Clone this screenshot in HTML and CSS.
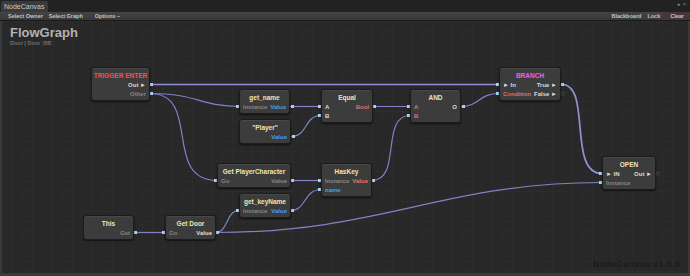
FILE: index.html
```html
<!DOCTYPE html>
<html lang="en">
<head>
    <title>NodeCanvas</title>
    <link rel="stylesheet" href="styles.css">
</head>
<body>
    <div class="window">
        <div class="tabbar">
            <div class="tab">NodeCanvas</div>
            <div class="win-icons"><span>&#9679;</span><span>&#215;</span></div>
        </div>
        <div class="toolbar">
            <span class="tool">Select Owner</span>
            <span class="tool">Select Graph</span>
            <span class="tool options">Options &#8211;</span>
            <span class="spacer"></span>
            <span class="tool">Blackboard</span>
            <span class="tool">Lock</span>
            <span class="tool clear">Clear</span>
        </div>
        <div class="canvas">
            <h1 class="graph-title">FlowGraph</h1>
            <div class="graph-sub">Door | Door_BB</div>

            <!-- wires -->
            <svg class="wires" width="686" height="253" viewBox="0 0 686 253">
                <g fill="none" stroke="#8380c6" stroke-width="1.2">
                    <path class="flow" d="M148 63.5 C 300 63.5, 350 63.5, 497 63.5"/>
                    <path d="M148 72.5 C 195 72.5, 200 85.5, 237 85.5"/>
                    <path d="M148 72.5 C 200 72.5, 160 159.5, 215 159.5"/>
                    <path d="M288 85.5 L 319 85.5"/>
                    <path d="M289 115.5 C 306 115.5, 302 94.5, 319 94.5"/>
                    <path d="M371 85.5 L 408 85.5"/>
                    <path d="M370 159.5 C 400 159.5, 378 94.5, 408 94.5"/>
                    <path d="M459 85.5 C 478 85.5, 476 72.5, 497 72.5"/>
                    <path class="flow" d="M560 63.5 C 590 63.5, 565 152.5, 600 152.5"/>
                    <path d="M289 159.5 L 319 159.5"/>
                    <path d="M289 189.5 C 304 189.5, 302 168.5, 319 168.5"/>
                    <path d="M132 211.5 L 163 211.5"/>
                    <path d="M214 211.5 C 226 211.5, 224 189.5, 237 189.5"/>
                    <path d="M214 211.5 C 380 211.5, 440 161.5, 600 161.5"/>
                </g>
                <g fill="#a8d4f4">
                    <rect x="148" y="62" width="3" height="3"/>
                    <rect x="148" y="71" width="3" height="3"/>
                    <rect x="234" y="84" width="3" height="3"/>
                    <rect x="289" y="84" width="3" height="3"/>
                    <rect x="290" y="114" width="3" height="3"/>
                    <rect x="316" y="84" width="3" height="3"/>
                    <rect x="316" y="93" width="3" height="3"/>
                    <rect x="371" y="84" width="3" height="3"/>
                    <rect x="405" y="84" width="3" height="3"/>
                    <rect x="405" y="93" width="3" height="3"/>
                    <rect x="460" y="84" width="3" height="3"/>
                    <rect x="494" y="62" width="3" height="3"/>
                    <rect x="494" y="71" width="3" height="3"/>
                    <rect x="559" y="62" width="3" height="3"/>
                    <rect x="212" y="158" width="3" height="3"/>
                    <rect x="289" y="158" width="3" height="3"/>
                    <rect x="316" y="158" width="3" height="3"/>
                    <rect x="316" y="167" width="3" height="3"/>
                    <rect x="370" y="158" width="3" height="3"/>
                    <rect x="234" y="188" width="3" height="3"/>
                    <rect x="289" y="188" width="3" height="3"/>
                    <rect x="132" y="210" width="3" height="3"/>
                    <rect x="160" y="210" width="3" height="3"/>
                    <rect x="214" y="210" width="3" height="3"/>
                    <rect x="597" y="151" width="3" height="3"/>
                    <rect x="597" y="160" width="3" height="3"/>
                </g>
                <g fill="#1a1a1a" stroke="#555" stroke-width="0.6">
                    <rect x="559.5" y="71.5" width="2.5" height="2.5"/>
                    <rect x="654.5" y="151.5" width="2.5" height="2.5"/>
                </g>
            </svg>

            <!-- nodes -->
            <div class="node" style="left:89px; top:46px; width:59px;">
                <div class="node-title red">TRIGGER ENTER</div>
                <div class="port-row"><span></span><span class="lt">Out &#9658;</span></div>
                <div class="port-row"><span></span><span class="dim">Other</span></div>
            </div>
            <div class="node" style="left:237px; top:68px; width:51px;">
                <div class="node-title">get_name</div>
                <div class="port-row"><span class="dim">Instance</span><span class="blue">Value</span></div>
            </div>
            <div class="node" style="left:237px; top:98px; width:52px;">
                <div class="node-title">"Player"</div>
                <div class="port-row"><span></span><span class="blue">Value</span></div>
            </div>
            <div class="node" style="left:319px; top:68px; width:52px;">
                <div class="node-title">Equal</div>
                <div class="port-row"><span class="lt">A</span><span class="pink">Bool</span></div>
                <div class="port-row"><span class="lt">B</span><span></span></div>
            </div>
            <div class="node" style="left:408px; top:68px; width:51px;">
                <div class="node-title">AND</div>
                <div class="port-row"><span class="pink">A</span><span class="lt">O</span></div>
                <div class="port-row"><span class="pink">B</span><span></span></div>
            </div>
            <div class="node" style="left:497px; top:46px; width:62px;">
                <div class="node-title magenta">BRANCH</div>
                <div class="port-row"><span class="lt">&#9658; In</span><span class="lt">True &#9658;</span></div>
                <div class="port-row"><span class="pink">Condition</span><span class="lt">False &#9658;</span></div>
            </div>
            <div class="node" style="left:215px; top:142px; width:74px;">
                <div class="node-title">Get PlayerCharacter</div>
                <div class="port-row"><span class="dim">Go</span><span class="dim">Value</span></div>
            </div>
            <div class="node" style="left:319px; top:142px; width:51px;">
                <div class="node-title">HasKey</div>
                <div class="port-row"><span class="dim">Instance</span><span class="pink">Value</span></div>
                <div class="port-row"><span class="blue">name</span><span></span></div>
            </div>
            <div class="node" style="left:237px; top:172px; width:52px;">
                <div class="node-title">get_keyName</div>
                <div class="port-row"><span class="dim">Instance</span><span class="blue">Value</span></div>
            </div>
            <div class="node" style="left:81px; top:194px; width:51px;">
                <div class="node-title">This</div>
                <div class="port-row"><span></span><span class="dim">Get</span></div>
            </div>
            <div class="node" style="left:163px; top:194px; width:51px;">
                <div class="node-title">Get Door</div>
                <div class="port-row"><span class="dim">Go</span><span class="lt">Value</span></div>
            </div>
            <div class="node" style="left:600px; top:135px; width:54px;">
                <div class="node-title">OPEN</div>
                <div class="port-row"><span class="lt">&#9658; IN</span><span class="lt">Out &#9658;</span></div>
                <div class="port-row"><span class="dim">Instance</span><span></span></div>
            </div>

            <div class="watermark">NodeCanvas v1.5.9</div>
        </div>
    </div>
</body>
</html>
```

FILE: styles.css
```css
/* dark editor window */
body {
    margin: 0;
    padding: 0;
    background-color: #1f1f1f;
    font-family: "Liberation Sans", Arial, sans-serif;
}

.window {
    width: 690px;
    height: 276px;
    display: flex;
    flex-direction: column;
    overflow: hidden;
}

.tabbar {
    height: 12px;
    display: flex;
    align-items: flex-end;
    background-color: #222222;
}

.tab {
    width: 44px;
    height: 11px;
    margin-left: 1px;
    padding-left: 3px;
    background-color: #3a3a3a;
    border-radius: 2px 2px 0 0;
    color: #c8c8c8;
    font-size: 7px;
    line-height: 11px;
}

.win-icons {
    margin-left: auto;
    margin-right: 4px;
    align-self: flex-start;
    display: flex;
    gap: 3px;
    color: #8a8a8a;
    font-size: 5px;
    line-height: 8px;
}

.toolbar {
    height: 8px;
    display: flex;
    align-items: center;
    padding-left: 5px;
    background: linear-gradient(#444444, #383838);
    border-bottom: 1px solid #191919;
}

.tool {
    color: #c4c4c4;
    font-size: 5.5px;
    font-weight: bold;
    line-height: 8px;
    padding: 0 3px;
}

.options {
    margin-left: 6px;
}

.spacer {
    flex: 1;
}

.clear {
    background-color: #4a3434;
    padding: 0 6px 0 7px;
}

.canvas {
    flex: 1;
    position: relative;
    background-color: #282828;
    background-image:
        linear-gradient(#2c2c2c 1px, transparent 1px),
        linear-gradient(90deg, #2c2c2c 1px, transparent 1px);
    background-size: 10px 10px;
    border: 2px solid #3a3a3a;
    border-top: 0;
    border-bottom-width: 3px;
    padding: 5px 8px;
}

.graph-title {
    margin: 0;
    color: #b2b2b2;
    font-size: 13px;
    line-height: 14px;
    font-weight: bold;
}

.graph-sub {
    color: #707070;
    font-size: 5.5px;
    font-weight: bold;
    line-height: 7px;
}

.wires {
    position: absolute;
    left: 0;
    top: 0;
}

.wires .flow {
    stroke-width: 1.7;
    stroke: #918fd6;
}

.node {
    position: absolute;
    background-color: #3c3c3c;
    border: 1px solid #1c1c1c;
    border-radius: 3px;
    box-shadow: 0 1px 2px rgba(0, 0, 0, 0.6), inset 0 1px 0 #484848;
    box-sizing: border-box;
    padding-bottom: 1px;
}

.node-title {
    height: 11px;
    padding-top: 2px;
    text-align: center;
    color: #f1e4b2;
    font-size: 6.5px;
    font-weight: bold;
    line-height: 11px;
    white-space: nowrap;
}

.node-title.red {
    color: #ff4c50;
}

.node-title.magenta {
    color: #f25ee6;
}

.port-row {
    display: flex;
    justify-content: space-between;
    height: 9px;
    padding: 0 3px;
    font-size: 6px;
    font-weight: bold;
    line-height: 9px;
    white-space: nowrap;
}

.lt {
    color: #dadada;
}

.dim {
    color: #858585;
}

.blue {
    color: #3fa2e6;
}

.pink {
    color: #d97474;
}

.watermark {
    position: absolute;
    right: 8px;
    bottom: 4px;
    color: #1b1b1b;
    font-size: 9px;
    font-weight: bold;
    letter-spacing: 0.3px;
}
```
